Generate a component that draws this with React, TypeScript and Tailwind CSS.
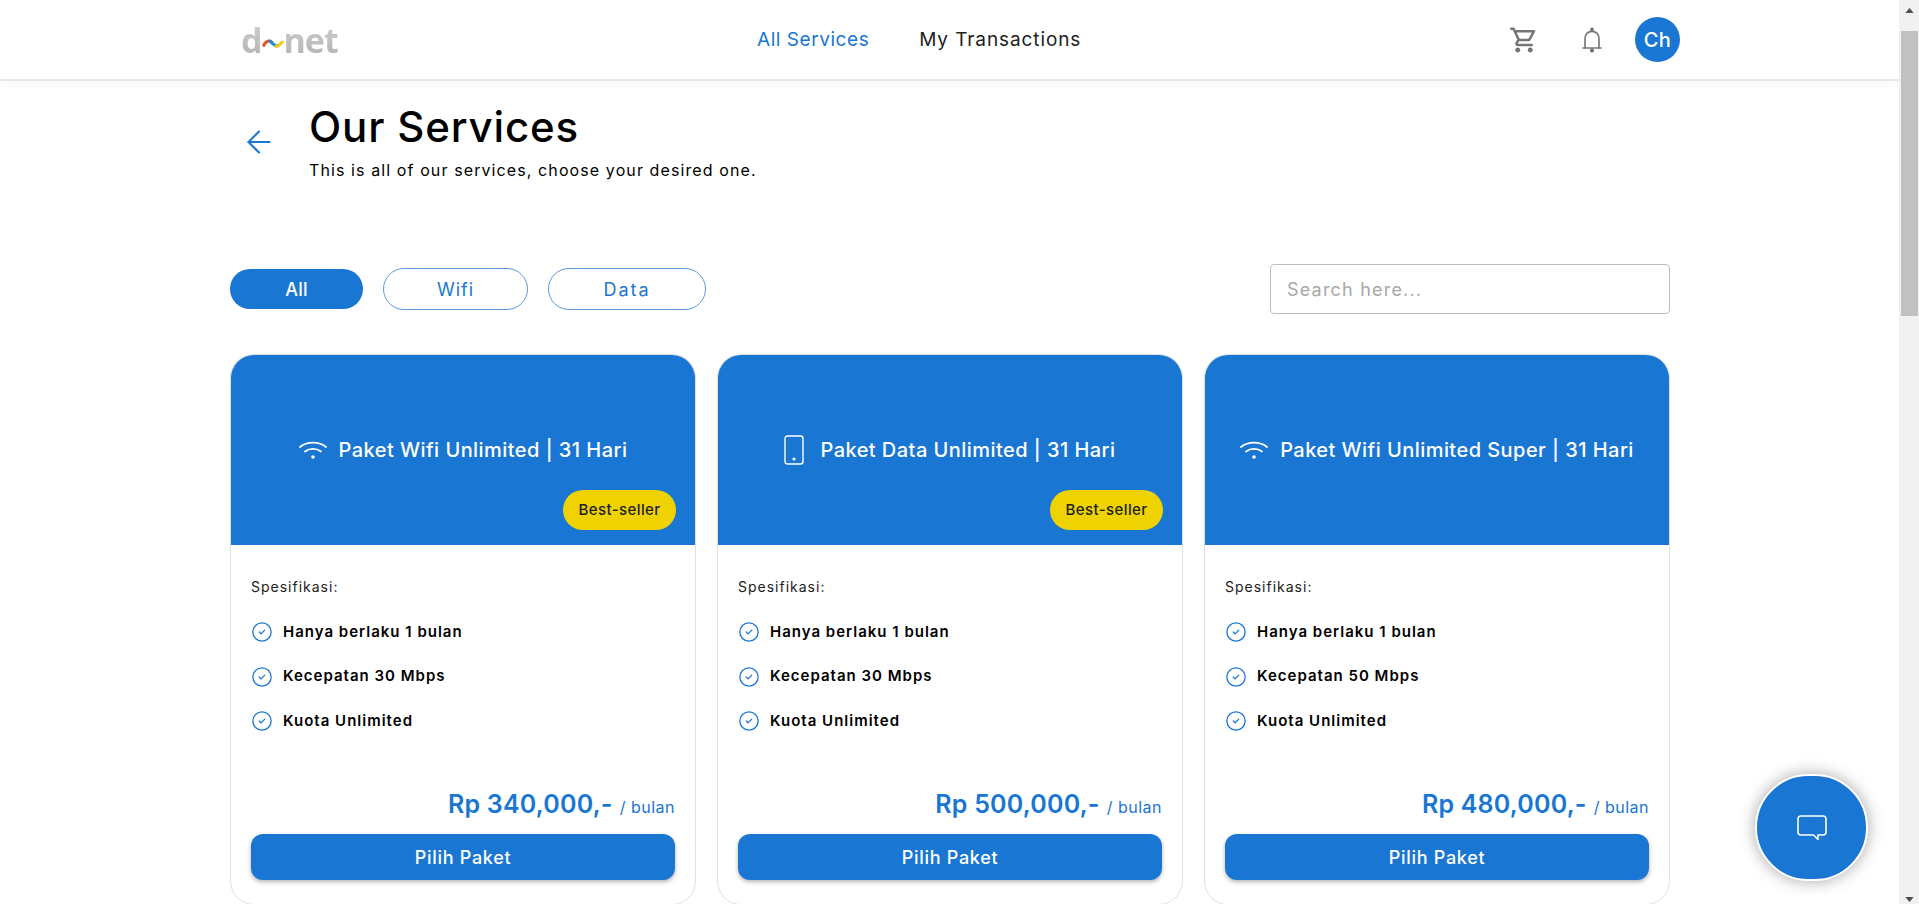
import React from 'react';
import { ArrowLeft, CircleCheck } from 'lucide-react';
import { MdOutlineShoppingCart } from 'react-icons/md';

const WifiIcon = () => (
  <svg viewBox="0 0 28 20" className="h-[20px] w-[28px] text-white" fill="none" stroke="currentColor" strokeWidth="1.8" strokeLinecap="round">
    <path d="M1 7C8 1.2 20 1.2 27 7" />
    <path d="M6 11.5C10.5 8 17.5 8 22 11.5" />
    <circle cx="14" cy="17" r="1.8" fill="currentColor" stroke="none" />
  </svg>
);

const PhoneIcon = () => (
  <svg viewBox="0 0 20 30" className="mr-[4px] h-[30px] w-[20px] text-white" fill="none" stroke="currentColor" strokeWidth="1.4">
    <rect x="1" y="1" width="18" height="28" rx="2.5" />
    <circle cx="10" cy="24" r="1.6" fill="currentColor" stroke="none" />
  </svg>
);

const BellIcon = () => (
  <svg viewBox="0 0 20 26" className="h-[26px] w-[20px] text-[#757575]" fill="none" stroke="currentColor" strokeWidth="1.6" strokeLinecap="round" strokeLinejoin="round">
    <path d="M1 21h18" />
    <path d="M3 21V11.5C3 7.4 6 4.4 10 4.4s7 3 7 7.1V21" />
    <circle cx="10" cy="2.4" r="1.1" fill="currentColor" />
    <circle cx="10" cy="23.6" r="1.3" fill="currentColor" />
  </svg>
);

const ChatIcon = () => (
  <svg viewBox="0 0 30 26" className="h-[26px] w-[30px] text-white" fill="none" stroke="currentColor" strokeWidth="1.6" strokeLinejoin="round">
    <path d="M4 1h22a3 3 0 0 1 3 3v13a3 3 0 0 1-3 3h-5v4.5L16.5 20H4a3 3 0 0 1-3-3V4a3 3 0 0 1 3-3z" />
  </svg>
);

const Logo = () => (
  <div className="flex items-center font-['Open_Sans',sans-serif] text-[34px] leading-none font-bold tracking-[-1px] blur-[0.6px]">
    <span className="bg-gradient-to-b from-[#cdcdcd] to-[#b4b4b4] bg-clip-text text-transparent">d</span>
    <svg viewBox="0 0 24 12" className="mt-[7px] h-[11px] w-[22px]" fill="none" strokeWidth="3.4" strokeLinecap="round">
      <path d="M2 8C4 3 8 2 11 5" stroke="#e4572e" />
      <path d="M9 3.5C12 6 13 9 17 8.5" stroke="#1e88e5" />
      <path d="M15 9C18 9 20 7 22 4.5" stroke="#f2c811" />
    </svg>
    <span className="bg-gradient-to-b from-[#cdcdcd] to-[#b4b4b4] bg-clip-text text-transparent">net</span>
  </div>
);

const services = [
  { title: 'Paket Wifi Unlimited | 31 Hari', icon: <WifiIcon />, badge: true, speed: '30 Mbps', price: '340,000' },
  { title: 'Paket Data Unlimited | 31 Hari', icon: <PhoneIcon />, badge: true, speed: '30 Mbps', price: '500,000' },
  { title: 'Paket Wifi Unlimited Super | 31 Hari', icon: <WifiIcon />, badge: false, speed: '50 Mbps', price: '480,000' },
];

function ServiceCard({ service }: { service: (typeof services)[number] }) {
  const specs = ['Hanya berlaku 1 bulan', `Kecepatan ${service.speed}`, 'Kuota Unlimited'];
  return (
    <div className="overflow-hidden rounded-[24px] border border-[#e0e0e0] bg-white">
      <div className="relative -mx-px -mt-px flex h-[191px] items-center justify-center gap-[12px] bg-[#1976d2]">
        {service.icon}
        <h3 className="text-[20px] font-medium tracking-[0.45px] text-white">{service.title}</h3>
        {service.badge && (
          <span className="absolute right-[20px] bottom-[15px] flex h-[40px] w-[113px] items-center justify-center rounded-full bg-[#eed202] text-[15px] font-medium tracking-[0.4px] text-[#212121]">
            Best-seller
          </span>
        )}
      </div>
      <div className="px-[20px] pt-[31px] pb-[24px]">
        <p className="text-[14px] leading-[21px] tracking-[1px] text-[#212121]">Spesifikasi:</p>
        <ul className="mt-[20px] flex flex-col gap-[14.5px]">
          {specs.map((spec) => (
            <li key={spec} className="flex h-[30px] items-center gap-[10px] text-[15px] font-semibold tracking-[1px] text-black">
              <CircleCheck className="h-[22px] w-[22px] text-[#1976d2]" strokeWidth={1.4} />
              {spec}
            </li>
          ))}
        </ul>
        <div className="mt-[49px] flex items-baseline justify-end gap-[7px] text-[#1976d2]">
          <span className="text-[25px] leading-[38px] font-semibold tracking-[0.2px]">Rp {service.price},-</span>
          <span className="text-[16px] tracking-[0.5px]">/ bulan</span>
        </div>
        <button className="mt-[11px] h-[46px] w-full rounded-[12px] bg-[#1976d2] text-[18px] font-medium tracking-[0.7px] text-white shadow-[0_2px_4px_rgba(0,0,0,0.3)]">
          Pilih Paket
        </button>
      </div>
    </div>
  );
}

function Scrollbar() {
  return (
    <aside className="flex h-screen w-[20px] flex-col bg-[#f1f1f1]">
      <svg viewBox="0 0 10 6" className="mt-[8px] ml-[6px] h-[5px] w-[9px] text-[#505050]" fill="currentColor">
        <path d="M5 0l5 6H0z" />
      </svg>
      <div className="mt-[18px] ml-[2px] h-[285px] w-[17px] bg-[#c1c1c1]" />
      <svg viewBox="0 0 10 6" className="mt-auto mb-[2px] ml-[6px] h-[5px] w-[9px] text-[#505050]" fill="currentColor">
        <path d="M0 0h10L5 6z" />
      </svg>
    </aside>
  );
}

export default function App() {
  return (
    <div className="flex h-screen overflow-hidden bg-white font-['Inter',sans-serif] text-black">
      <div className="h-screen flex-1 overflow-hidden">
        <header className="flex h-[81px] items-center border-b-2 border-[#e8e8e8] bg-white shadow-[0_4px_8px_rgba(0,0,0,0.03)]">
          <div className="ml-[241px] w-[440px]">
            <Logo />
          </div>
          <nav className="mt-px ml-[76px] flex items-center gap-[50px] text-[19px] tracking-[0.55px]">
            <a className="text-[#1976d2]">All Services</a>
            <a className="tracking-[0.9px] text-[#212121]">My Transactions</a>
          </nav>
          <div className="mr-[219px] ml-auto flex items-center">
            <MdOutlineShoppingCart className="h-[30px] w-[30px] text-[#757575]" />
            <span className="ml-[43px] flex">
              <BellIcon />
            </span>
            <span className="ml-[33px] flex h-[45px] w-[45px] items-center justify-center rounded-full bg-[#1976d2] text-[20px] font-medium tracking-[0.5px] text-white">
              Ch
            </span>
          </div>
        </header>

        <main className="ml-[230px] w-[1440px]">
          <section className="flex items-start pt-[21px]">
            <ArrowLeft className="mt-[22px] ml-[11px] h-[36px] w-[36px] text-[#1976d2]" strokeWidth={1.4} />
            <div className="ml-[32px]">
              <h1 className="text-[42px] leading-[50px] font-medium tracking-[0.85px]">Our Services</h1>
              <p className="mt-[6px] text-[16px] leading-[24px] tracking-[1.1px]">This is all of our services, choose your desired one.</p>
            </div>
          </section>

          <section className="mt-[82px] flex items-center">
            <button className="h-[40px] w-[133px] rounded-full bg-[#1976d2] text-[18px] font-medium tracking-[0.3px] text-white">All</button>
            <button className="ml-[20px] h-[42px] w-[145px] rounded-full border border-[#5d9bdc] text-[18px] tracking-[1px] text-[#1976d2]">Wifi</button>
            <button className="ml-[20px] h-[42px] w-[158px] rounded-full border border-[#5d9bdc] text-[18px] tracking-[2px] text-[#1976d2]">Data</button>
            <input
              placeholder="Search here..."
              className="ml-auto h-[50px] w-[400px] rounded-[4px] border border-[#bdbdbd] px-[16px] text-[18px] tracking-[1.2px] placeholder:text-[#a8a8a8]"
            />
          </section>

          <section className="mt-[40px] grid grid-cols-3 gap-[21px]">
            {services.map((service) => (
              <ServiceCard key={service.price} service={service} />
            ))}
          </section>
        </main>
      </div>

      <Scrollbar />

      <button className="fixed right-[51px] bottom-[23px] flex h-[107px] w-[113px] items-center justify-center rounded-full border-2 border-white bg-[#1976d2] shadow-[0_0_16px_rgba(0,0,0,0.35)]">
        <ChatIcon />
      </button>
    </div>
  );
}
